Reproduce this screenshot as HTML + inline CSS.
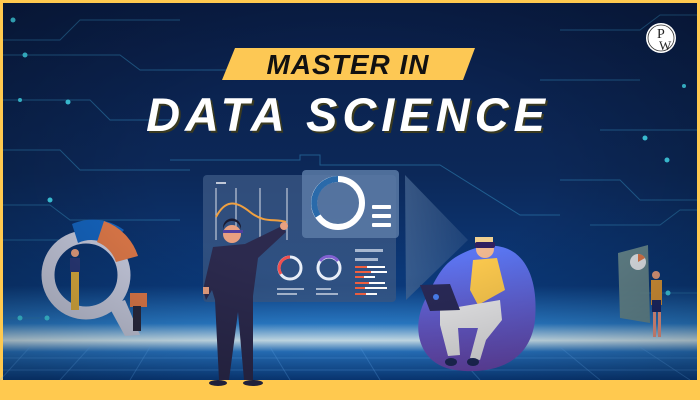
<!DOCTYPE html>
<html><head><style>
html,body{margin:0;padding:0;width:700px;height:400px;overflow:hidden;background:#ffc94f}
svg{display:block}
</style></head><body>
<svg width="700" height="400" viewBox="0 0 700 400" xmlns="http://www.w3.org/2000/svg">
<defs>
<linearGradient id="bg" x1="0" y1="0" x2="0" y2="1">
<stop offset="0" stop-color="#0a1e48"/>
<stop offset="0.45" stop-color="#0c2858"/>
<stop offset="0.75" stop-color="#0b3a7c"/>
<stop offset="0.85" stop-color="#2b80d0"/>
<stop offset="0.895" stop-color="#d8f2ff"/>
<stop offset="0.925" stop-color="#2a7ccf"/>
<stop offset="1" stop-color="#0a4088"/>
</linearGradient>
<radialGradient id="vig" cx="0.5" cy="0.45" r="0.7">
<stop offset="0.4" stop-color="#000" stop-opacity="0"/>
<stop offset="1" stop-color="#000" stop-opacity="0.3"/>
</radialGradient>
<linearGradient id="bean" x1="0" y1="0" x2="0" y2="1">
<stop offset="0" stop-color="#5a78f5"/>
<stop offset="1" stop-color="#6a48b0"/>
</linearGradient>
<linearGradient id="tri" x1="0" y1="0" x2="1" y2="0">
<stop offset="0" stop-color="#4a6a95" stop-opacity="0.7"/>
<stop offset="1" stop-color="#4a6a95" stop-opacity="0.3"/>
</linearGradient>
</defs>
<rect x="3" y="3" width="694" height="377" fill="url(#bg)"/>
<g stroke="#5fb0ff" stroke-opacity="0.35" stroke-width="1" fill="none">
<path d="M3 358 L697 358 M3 370 L697 370"/>
<path d="M30 347 L0 380 M90 347 L60 380 M150 347 L130 380 M270 347 L290 380 M360 347 L380 380 M450 347 L480 380 M560 347 L600 380 M640 347 L690 380"/>
</g>
<g stroke="#2f7fb0" stroke-opacity="0.6" stroke-width="1" fill="none">
<path d="M3 40 L60 40 L80 20 L180 20"/>
<path d="M3 55 L120 55 L140 70 L230 70"/>
<path d="M3 100 L90 100 L110 120 L170 120"/>
<path d="M3 150 L60 150 L80 170 L190 170"/>
<path d="M3 205 L50 205 L70 220 L180 220"/>
<path d="M3 240 L60 240"/>
<path d="M3 318 L40 318"/>
<path d="M560 30 L640 30 L660 15 L697 15"/>
<path d="M540 80 L640 80"/>
<path d="M600 130 L697 130"/>
<path d="M560 180 L620 180 L640 200 L697 200"/>
<path d="M590 225 L660 225 L680 210 L697 210"/>
<path d="M640 293 L697 293"/>
<path d="M170 160 L300 160 L300 155 L320 155 L320 165 L440 165 L520 215 L560 215"/>
</g>
<g fill="#3fd0e8">
<circle cx="13" cy="20" r="2.5"/><circle cx="25" cy="55" r="2.5"/><circle cx="20" cy="100" r="2"/>
<circle cx="68" cy="102" r="2.5"/><circle cx="50" cy="200" r="2.5"/><circle cx="20" cy="318" r="2.5"/>
<circle cx="667" cy="33" r="2.5"/><circle cx="684" cy="86" r="2"/><circle cx="645" cy="138" r="2.5"/>
<circle cx="667" cy="160" r="2.5"/><circle cx="668" cy="293" r="2.5"/><circle cx="47" cy="318" r="2.5"/>
</g>
<circle cx="86" cy="275" r="38" fill="none" stroke="#c8cce0" stroke-width="13"/>
<path d="M72 224 A52 52 0 0 1 124 230 L110 246 A32 32 0 0 0 78 243 Z" fill="#1565c0"/>
<path d="M104 221 A55 55 0 0 1 138 256 L116 262 A32 32 0 0 0 97 242 Z" fill="#e07a4a"/>
<path d="M108 305 L125 300 L140 335 L125 336 Z" fill="#c8cce0"/>
<rect x="71" y="270" width="8" height="40" fill="#e0b040"/>
<rect x="70" y="258" width="10" height="14" fill="#2a3a7a"/>
<circle cx="75" cy="253" r="4" fill="#e8a080"/>
<rect x="130" y="293" width="17" height="14" fill="#e07a4a"/>
<rect x="133" y="306" width="8" height="25" fill="#2a2a40"/>
<path d="M618 253 L648 245 L650 323 L620 318 Z" fill="#6f9092" opacity="0.9"/>
<circle cx="638" cy="262" r="8" fill="#e8ecf0"/>
<path d="M638 262 L638 254 A8 8 0 0 1 645 258 Z" fill="#e07a4a"/>
<rect x="651" y="280" width="11" height="25" fill="#e09a3a"/>
<rect x="652" y="300" width="9" height="12" fill="#1e2a6a"/>
<rect x="653" y="312" width="3" height="25" fill="#f09a8a"/><rect x="658" y="312" width="3" height="25" fill="#f09a8a"/>
<circle cx="656" cy="275" r="4" fill="#e8a080"/>
<rect x="203" y="175" width="193" height="127" rx="4" fill="#3c5a86" opacity="0.75"/>
<rect x="302" y="170" width="97" height="68" rx="4" fill="#5a7aa6" opacity="0.85"/>
<path d="M405 175 L468 240 L406 300 Z" fill="url(#tri)"/>
<g stroke="#c0c8d8" stroke-width="1.2">
<path d="M216 188 V240 M236 188 V240 M260 188 V240 M287 188 V240"/>
</g>
<rect x="216" y="182" width="10" height="2" fill="#c0c8d8"/>
<path d="M216 217 C225 200 235 200 250 212 S275 218 286 222" stroke="#f0a040" stroke-width="2" fill="none"/>
<circle cx="338" cy="203" r="24" fill="none" stroke="#ffffff" stroke-width="6"/>
<path d="M338 179 A24 24 0 0 0 318 216" fill="none" stroke="#2a6aaa" stroke-width="6"/>
<rect x="372" y="205" width="19" height="4" rx="1" fill="#fff"/>
<rect x="372" y="214" width="19" height="4" rx="1" fill="#fff"/>
<rect x="372" y="223" width="19" height="4" rx="1" fill="#fff"/>
<circle cx="290" cy="268" r="11" fill="none" stroke="#e8eef8" stroke-width="3"/>
<path d="M290 257 A11 11 0 0 0 281 274" fill="none" stroke="#f05050" stroke-width="3"/>
<circle cx="329" cy="268" r="11" fill="none" stroke="#e8eef8" stroke-width="3"/>
<path d="M320 261 A11 11 0 0 1 338 261" fill="none" stroke="#8060d0" stroke-width="3"/>
<g fill="#a8b8d0">
<rect x="277" y="288" width="27" height="2"/><rect x="277" y="293" width="20" height="2"/>
<rect x="316" y="288" width="15" height="2"/><rect x="316" y="293" width="22" height="2"/>
<rect x="355" y="249" width="28" height="3"/><rect x="355" y="258" width="23" height="3"/>
</g>
<g fill="#fff"><rect x="355" y="266" width="30" height="2"/><rect x="355" y="271" width="32" height="2"/><rect x="355" y="276" width="20" height="2"/><rect x="355" y="282" width="30" height="2"/><rect x="355" y="287" width="32" height="2"/><rect x="355" y="293" width="22" height="2"/></g>
<g fill="#f06040"><rect x="355" y="266" width="12" height="2"/><rect x="355" y="271" width="16" height="2"/><rect x="355" y="276" width="9" height="2"/><rect x="355" y="282" width="14" height="2"/><rect x="355" y="287" width="10" height="2"/><rect x="355" y="293" width="11" height="2"/></g>
<path d="M213 247 L245 244 L282 226 L286 232 L258 258 L253 296 L253 380 L244 380 L238 312 L229 380 L219 380 L215 300 L212 290 L206 300 L203 290 Z" fill="#2c2a4e"/>
<rect x="203" y="287" width="6" height="7" fill="#e8a080"/>
<circle cx="284" cy="226" r="4" fill="#e8a080"/>
<circle cx="232" cy="234" r="9" fill="#e8a080"/>
<path d="M223 232 A9 10 0 0 1 241 230 L241 227 A9 9 0 0 0 223 228 Z" fill="#1a1a30"/>
<rect x="223" y="230" width="20" height="3" fill="#5040a0"/>
<ellipse cx="218" cy="383" rx="9" ry="3" fill="#20203a"/>
<ellipse cx="253" cy="383" rx="10" ry="3" fill="#20203a"/>
<path d="M470 250 C510 235 540 260 535 320 C530 365 490 375 455 370 C420 365 410 330 425 300 C440 270 445 260 470 250 Z" fill="url(#bean)"/>
<path d="M473 260 L497 258 L505 290 L478 305 L470 290 Z" fill="#fcc94e"/>
<circle cx="485" cy="249" r="9" fill="#f0b890"/>
<rect x="475" y="237" width="18" height="6" fill="#f0d090"/>
<rect x="475" y="242" width="20" height="6" rx="2" fill="#302060"/>
<path d="M440 310 L500 300 L502 320 L486 340 L480 360 L470 358 L478 328 L458 328 L460 355 L448 356 L440 325 Z" fill="#e8e8ea"/>
<path d="M420 285 L450 284 L460 310 L430 311 Z" fill="#2a2a58"/>
<circle cx="436" cy="297" r="3" fill="#4a80f0"/>
<ellipse cx="451" cy="362" rx="6" ry="4" fill="#1e2a5a"/>
<ellipse cx="473" cy="362" rx="6" ry="4" fill="#1e2a5a"/>
<rect x="3" y="3" width="694" height="377" fill="url(#vig)"/>
<path d="M235 48 L475 48 L463 80 L222 80 Z" fill="#fdc854"/>
<text x="348" y="74" text-anchor="middle" font-family="Liberation Sans, sans-serif" font-weight="bold" font-style="italic" font-size="28" fill="#111" letter-spacing="1">MASTER IN</text>
<text x="350" y="133" text-anchor="middle" font-family="Liberation Sans, sans-serif" font-weight="bold" font-style="italic" font-size="47" fill="#3a3a20" letter-spacing="5">DATA SCIENCE</text>
<text x="348" y="131" text-anchor="middle" font-family="Liberation Sans, sans-serif" font-weight="bold" font-style="italic" font-size="47" fill="#ffffff" letter-spacing="5">DATA SCIENCE</text>
<circle cx="661" cy="38" r="15" fill="#fff"/>
<circle cx="661" cy="38" r="13" fill="none" stroke="#333" stroke-width="0.8"/>
<text x="657" y="38" font-family="Liberation Serif, serif" font-size="14" fill="#222">P</text>
<text x="659" y="50" font-family="Liberation Serif, serif" font-size="13" fill="#222">W</text>
</svg>
</body></html>
